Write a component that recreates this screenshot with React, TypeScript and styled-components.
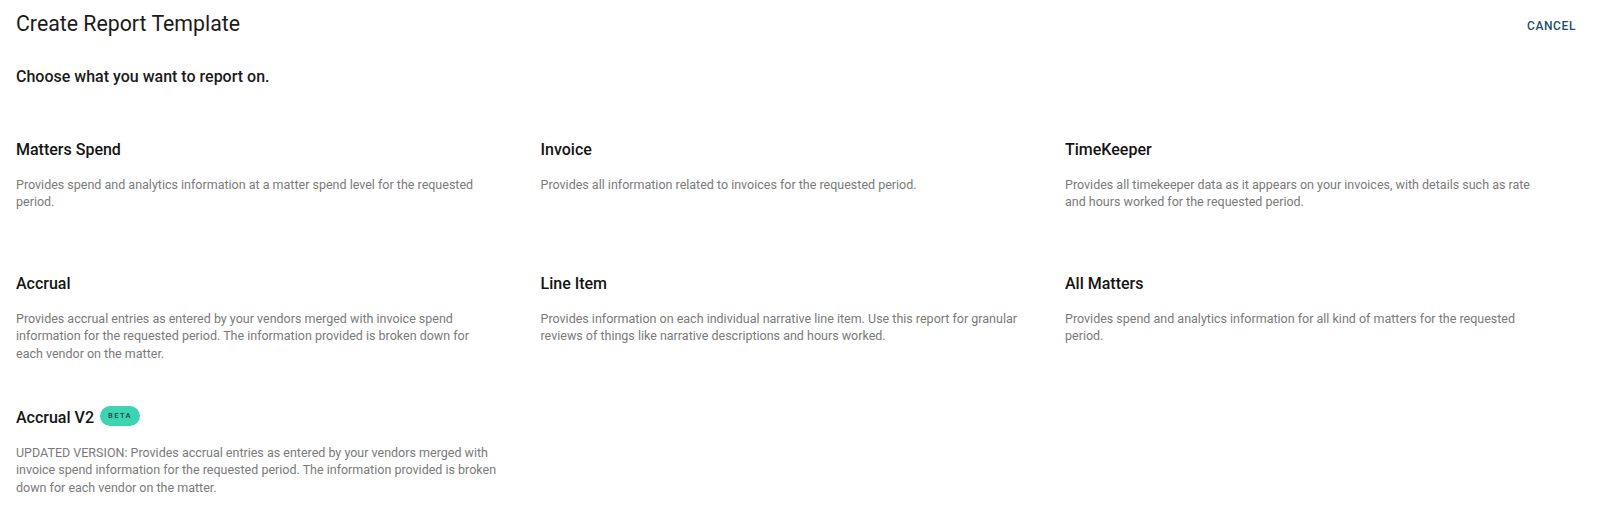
import React from "react";
import styled, { createGlobalStyle } from "styled-components";

const Global = createGlobalStyle`
  html, body { margin: 0; padding: 0; background: #fff; }
  body { font-family: Roboto, "Noto Sans", Arial, sans-serif; -webkit-font-smoothing: antialiased; }
  * { box-sizing: border-box; }
`;

const Page = styled.div`
  padding: 0 16px;
  width: 1600px;
`;

const Header = styled.div`
  display: flex;
  justify-content: space-between;
  align-items: flex-start;
  height: 50px;
  padding-top: 10px;
`;

const Title = styled.h1`
  margin: 0;
  font-size: 21.3px;
  font-weight: 400;
  line-height: 28px;
  color: #1b1b1b;
`;

const CancelButton = styled.button`
  border: none;
  background: none;
  padding: 0;
  margin-top: 8px;
  margin-right: 8px;
  font-family: inherit;
  font-size: 12px;
  font-weight: 500;
  letter-spacing: 0.6px;
  line-height: 16px;
  color: #1d4f6e;
  cursor: pointer;
`;

const Subtitle = styled.h2`
  margin: 16px 0 0;
  font-size: 16px;
  font-weight: 500;
  line-height: 22px;
  color: #1b1b1b;
`;

const Grid = styled.div`
  display: grid;
  grid-template-columns: repeat(3, 524.5px);
  grid-auto-rows: 134px;
  margin-top: 50px;
`;

const Card = styled.div`
  display: flex;
  flex-direction: column;
  cursor: pointer;
`;

const CardTitle = styled.div`
  display: flex;
  align-items: center;
  gap: 6px;
  height: 22px;
  font-size: 16px;
  font-weight: 500;
  color: #141414;
`;

const Badge = styled.span`
  display: inline-flex;
  align-items: center;
  justify-content: center;
  width: 40px;
  height: 20px;
  margin-bottom: 3px;
  border-radius: 10px;
  background: #3dd4b3;
  color: #24463f;
  font-size: 7.5px;
  font-weight: 500;
  letter-spacing: 1.4px;
`;

const CardText = styled.p`
  margin: 15.5px 0 0;
  max-width: 481px;
  font-size: 12.5px;
  line-height: 17.5px;
  color: #7a7a7a;
`;

const reports = [
  {
    title: "Matters Spend",
    text: "Provides spend and analytics information at a matter spend level for the requested period.",
  },
  {
    title: "Invoice",
    text: "Provides all information related to invoices for the requested period.",
  },
  {
    title: "TimeKeeper",
    text: "Provides all timekeeper data as it appears on your invoices, with details such as rate and hours worked for the requested period.",
  },
  {
    title: "Accrual",
    text: "Provides accrual entries as entered by your vendors merged with invoice spend information for the requested period. The information provided is broken down for each vendor on the matter.",
  },
  {
    title: "Line Item",
    text: "Provides information on each individual narrative line item. Use this report for granular reviews of things like narrative descriptions and hours worked.",
  },
  {
    title: "All Matters",
    text: "Provides spend and analytics information for all kind of matters for the requested period.",
  },
  {
    title: "Accrual V2",
    beta: true,
    text: "UPDATED VERSION: Provides accrual entries as entered by your vendors merged with invoice spend information for the requested period. The information provided is broken down for each vendor on the matter.",
  },
];

export default function App() {
  return (
    <>
      <Global />
      <Page>
        <Header>
          <Title>Create Report Template</Title>
          <CancelButton>CANCEL</CancelButton>
        </Header>
        <Subtitle>Choose what you want to report on.</Subtitle>
        <Grid>
          {reports.map((r) => (
            <Card key={r.title}>
              <CardTitle>
                {r.title}
                {r.beta && <Badge>BETA</Badge>}
              </CardTitle>
              <CardText>{r.text}</CardText>
            </Card>
          ))}
        </Grid>
      </Page>
    </>
  );
}
